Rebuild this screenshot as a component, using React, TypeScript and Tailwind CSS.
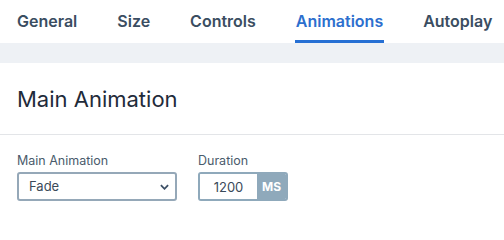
import { useState } from 'react';

const tabs = ['General', 'Size', 'Controls', 'Animations', 'Autoplay'];

export default function App() {
  const [active, setActive] = useState('Animations');
  const [duration, setDuration] = useState('1200');

  return (
    <div className="w-[504px] h-[216px] bg-white overflow-hidden font-['Inter',sans-serif]">
      <div className="flex h-[43px] pl-[16px] gap-[38px]">
        {tabs.map((tab) => (
          <button
            key={tab}
            onClick={() => setActive(tab)}
            className={`h-full px-px pt-[2px] border-b-[3px] text-[16px] font-semibold ${
              tab === active
                ? 'border-[#2670d4] text-[#2d6fce]'
                : 'border-transparent text-[#3a4d61]'
            }`}
          >
            {tab}
          </button>
        ))}
      </div>
      <div className="h-[20px] bg-[#eef1f5]" />
      <div className="h-[72px] flex items-center px-[17px] border-b border-[#e3e5e8]">
        <h2 className="text-[22px] text-[#1f2b3a] pt-[1px]">Main Animation</h2>
      </div>
      <div className="flex gap-[21px] px-[17px] pt-[18px]">
        <div className="flex flex-col gap-[3px]">
          <label className="text-[12.5px] text-[#4a5b6c] leading-[16px]">Main Animation</label>
          <div className="relative w-[160px] h-[29px]">
            <select
              defaultValue="Fade"
              className="appearance-none w-full h-full border-2 border-[#95a8b8] rounded-[3px] pl-[10px] text-[13px] text-[#3a4a5a] bg-white outline-none"
            >
              <option>Fade</option>
              <option>Slide</option>
              <option>Zoom</option>
            </select>
            <svg
              viewBox="0 0 10 6"
              className="absolute right-[8px] top-[12px] w-[9px] h-[6px] pointer-events-none"
              fill="none"
              stroke="#3d5066"
              strokeWidth="2"
            >
              <path d="M1 1l4 4 4-4" />
            </svg>
          </div>
        </div>
        <div className="flex flex-col gap-[3px]">
          <label className="text-[12.5px] text-[#4a5b6c] leading-[16px]">Duration</label>
          <div className="flex w-[90px] h-[29px] rounded-[3px] overflow-hidden border-2 border-[#8fa9bb]">
            <input
              value={duration}
              onChange={(e) => setDuration(e.target.value)}
              className="w-[57px] h-full text-center text-[13px] text-[#3a4a5a] outline-none bg-white"
            />
            <span className="flex-1 flex items-center justify-center bg-[#8fa9bb] text-white text-[12px] font-bold">
              MS
            </span>
          </div>
        </div>
      </div>
    </div>
  );
}
